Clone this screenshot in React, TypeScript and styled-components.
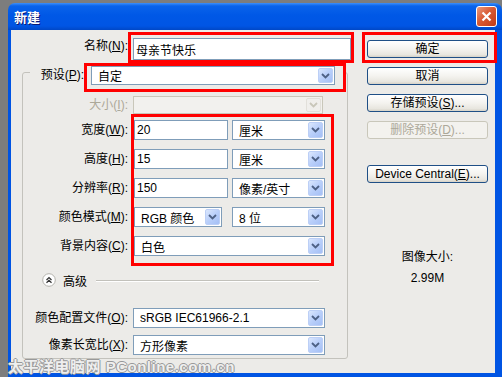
import styled, { createGlobalStyle } from "styled-components";

const GlobalStyle = createGlobalStyle`
  html, body {
    margin: 0;
    padding: 0;
    background: #7d7d7d;
    overflow: hidden;
  }
  body {
    font-family: "Liberation Sans", "Noto Sans CJK SC", sans-serif;
    font-size: 12px;
    color: #000;
  }
`;

const FACE = "#ecebe8";
const RED = "#ff0000";

const Window = styled.div`
  position: relative;
  margin: 3px 0 0 8px;
  width: 494px;
  display: flex;
  flex-direction: column;
`;

const TitleBar = styled.div`
  height: 27px;
  border-radius: 7px 7px 0 0;
  background: linear-gradient(
    #3d8ff9 0,
    #0a63ea 3px,
    #0058e6 45%,
    #0055e4 85%,
    #0047c6 100%
  );
  display: flex;
  align-items: center;
  justify-content: space-between;
  padding: 0 5px 0 6px;
`;

const Title = styled.span`
  color: #fff;
  font-weight: bold;
  font-size: 13px;
  text-shadow: 1px 1px 0 #0a1874;
`;

const CloseBtn = styled.div`
  width: 19px;
  height: 19px;
  border: 1px solid #fff;
  border-radius: 3px;
  background: linear-gradient(135deg, #e89a7e 0, #d95a34 45%, #c23a16 100%);
  display: flex;
  align-items: center;
  justify-content: center;
`;

const Client = styled.div`
  height: 343px;
  background: ${FACE};
  border-left: 3px solid #0054e3;
  border-right: 7px solid #0054e3;
  border-bottom: 4px solid #0054e3;
  display: grid;
  grid-template-columns: 345px 1fr;
`;

const LeftCol = styled.div`
  display: flex;
  flex-direction: column;
`;

const RightCol = styled.div`
  display: flex;
  flex-direction: column;
`;

const NameRow = styled.div`
  margin-top: 2px;
  display: grid;
  grid-template-columns: 117px 226px;
  align-items: start;
`;

const Label = styled.span<{ $disabled?: boolean; $h?: number }>`
  text-align: right;
  white-space: nowrap;
  line-height: ${(p) => p.$h ?? 20}px;
  height: ${(p) => p.$h ?? 20}px;
  color: ${(p) => (p.$disabled ? "#aca899" : "#000")};
`;

const RedBox = styled.div<{ $pad: string }>`
  border: 3px solid ${RED};
  padding: ${(p) => p.$pad};
  display: flex;
  flex-direction: column;
  gap: 9px;
`;

const TextInput = styled.input<{ $w: number; $h?: number }>`
  box-sizing: border-box;
  width: ${(p) => p.$w}px;
  height: ${(p) => p.$h ?? 20}px;
  border: 1px solid #7f9db9;
  background: #fff;
  padding: 0 0 0 2px;
  margin: 0;
  font: inherit;
  color: #000;
  outline: none;
`;

const SelectBox = styled.div<{ $w: number; $h?: number; $disabled?: boolean }>`
  box-sizing: border-box;
  width: ${(p) => p.$w}px;
  height: ${(p) => p.$h ?? 20}px;
  border: 1px solid ${(p) => (p.$disabled ? "#c9c7ba" : "#7f9db9")};
  background: ${(p) => (p.$disabled ? "#f2f1ee" : "#fff")};
  display: flex;
  align-items: center;
  justify-content: space-between;
  padding: 1px;
`;

const SelectText = styled.span`
  padding-left: 5px;
  white-space: nowrap;
`;

const ArrowBtn = styled.div<{ $disabled?: boolean }>`
  width: 15px;
  align-self: stretch;
  border-radius: 2px;
  background: ${(p) =>
    p.$disabled
      ? "#f0efec"
      : "linear-gradient(135deg, #dbe7fd 0, #b9cffa 50%, #a4bff5 100%)"};
  border: ${(p) => (p.$disabled ? "1px solid #e2e0da" : "1px solid #bccff6")};
  box-sizing: border-box;
  display: flex;
  align-items: center;
  justify-content: center;
`;

const Group = styled.div`
  margin: 9px 0 0 11px;
  width: 324px;
  border: 1px solid #c3c2bc;
  border-radius: 3px;
  padding-bottom: 3px;
  display: flex;
  flex-direction: column;
`;

const GroupHeader = styled.div`
  margin: -10px 0 0 7px;
  width: 316px;
  background: ${FACE};
  display: grid;
  grid-template-columns: 54px 262px;
  align-items: start;
`;

const PlainRow = styled.div<{ $top: number }>`
  margin-top: ${(p) => p.$top}px;
  display: grid;
  grid-template-columns: 105px auto;
  column-gap: 5px;
  align-items: center;
`;

const FieldSection = styled.div`
  display: flex;
  align-items: flex-start;
`;

const LabelStack = styled.div`
  width: 105px;
  padding: 6px 3px 0 0;
  display: flex;
  flex-direction: column;
  gap: 9px;
`;

const FieldLine = styled.div<{ $gap?: number }>`
  display: flex;
  gap: ${(p) => p.$gap ?? 4}px;
`;

const AdvancedRow = styled.div`
  margin: 7px 0 0 19px;
  height: 14px;
  display: flex;
  align-items: center;
  gap: 7px;
`;

const Rule = styled.div`
  margin-left: 2px;
  width: 223px;
  height: 1px;
  background: #c2c1bb;
  box-shadow: 0 1px 0 #fff;
`;

const Button = styled.div<{ $disabled?: boolean }>`
  box-sizing: border-box;
  width: 121px;
  height: 18px;
  border: 1px solid ${(p) => (p.$disabled ? "#c9c7ba" : "#1f4f86")};
  border-radius: 3px;
  background: ${(p) =>
    p.$disabled
      ? "#f3f2ee"
      : "linear-gradient(#ffffff 0, #f4f3ef 50%, #e8e6df 85%, #d6d2c7 100%)"};
  color: ${(p) => (p.$disabled ? "#aca899" : "#000")};
  display: flex;
  align-items: center;
  justify-content: center;
  white-space: nowrap;
  line-height: 16px;
`;

const ButtonSlot = styled.div<{ $top: number }>`
  margin: ${(p) => p.$top}px 0 0 11px;
`;

const OkBox = styled.div`
  margin: 2px 0 0 6px;
  width: 125px;
  border: 3px solid ${RED};
  padding: 5px 2px 2px;
`;

const Info = styled.div`
  margin: 67px 0 0 11px;
  width: 121px;
  text-align: center;
  line-height: 14px;
  display: flex;
  flex-direction: column;
  gap: 7px;
`;

const Watermark = styled.div`
  position: absolute;
  left: 0;
  top: 356px;
  font-size: 15px;
  line-height: 16px;
  font-weight: bold;
  color: rgba(255, 255, 255, 0.85);
  letter-spacing: 0.5px;
  white-space: nowrap;
  text-shadow: 1px 0 0 #999, -1px 0 0 #999, 0 1px 0 #999, 0 -1px 0 #999;
`;

function Arrow({ disabled }: { disabled?: boolean }) {
  return (
    <ArrowBtn $disabled={disabled}>
      <svg width="9" height="6" viewBox="0 0 9 6">
        <path
          d="M1 1 L4.5 4.5 L8 1"
          fill="none"
          stroke={disabled ? "#c9c7ba" : "#4d6185"}
          strokeWidth="1.8"
        />
      </svg>
    </ArrowBtn>
  );
}

type SelectProps = {
  w: number;
  h?: number;
  text?: string;
  disabled?: boolean;
};

function Select({ w, h, text, disabled }: SelectProps) {
  return (
    <SelectBox $w={w} $h={h} $disabled={disabled}>
      <SelectText>{text}</SelectText>
      <Arrow disabled={disabled} />
    </SelectBox>
  );
}

function Mn({ label, k }: { label: string; k: string }) {
  return (
    <>
      {label}(<u>{k}</u>):
    </>
  );
}

function CollapseIcon() {
  return (
    <svg width="14" height="14" viewBox="0 0 14 14">
      <circle cx="7" cy="7" r="6.3" fill="#fff" stroke="#b4b3ad" />
      <path
        d="M4.5 7 L7 4.6 L9.5 7 M4.5 9.8 L7 7.4 L9.5 9.8"
        fill="none"
        stroke="#333"
        strokeWidth="1.3"
      />
    </svg>
  );
}

export default function App() {
  return (
    <>
      <GlobalStyle />
      <Window>
        <TitleBar>
          <Title>新建</Title>
          <CloseBtn>
            <svg width="11" height="11" viewBox="0 0 11 11">
              <path d="M1.5 1.5 L9.5 9.5 M9.5 1.5 L1.5 9.5" stroke="#fff" strokeWidth="2.2" />
            </svg>
          </CloseBtn>
        </TitleBar>
        <Client>
          <LeftCol>
            <NameRow>
              <Label $h={28}>
                <Mn label="名称" k="N" />
              </Label>
              <RedBox $pad="3px 0 0 2px">
                <TextInput $w={218} $h={22} value="母亲节快乐" readOnly />
              </RedBox>
            </NameRow>

            <Group>
              <GroupHeader>
                <Label $h={25}>
                  <Mn label="预设" k="P" />
                </Label>
                <RedBox $pad="0 8px 4px 4px">
                  <Select w={244} h={19} text="自定" />
                </RedBox>
              </GroupHeader>

              <PlainRow $top={4}>
                <Label $disabled $h={18}>
                  <Mn label="大小" k="I" />
                </Label>
                <Select w={190} h={18} disabled />
              </PlainRow>

              <FieldSection>
                <LabelStack>
                  <Label>
                    <Mn label="宽度" k="W" />
                  </Label>
                  <Label>
                    <Mn label="高度" k="H" />
                  </Label>
                  <Label>
                    <Mn label="分辨率" k="R" />
                  </Label>
                  <Label>
                    <Mn label="颜色模式" k="M" />
                  </Label>
                  <Label>
                    <Mn label="背景内容" k="C" />
                  </Label>
                </LabelStack>
                <RedBox $pad="3px 6px 7px 0">
                  <FieldLine>
                    <TextInput $w={94} value="20" readOnly />
                    <Select w={93} text="厘米" />
                  </FieldLine>
                  <FieldLine>
                    <TextInput $w={94} value="15" readOnly />
                    <Select w={93} text="厘米" />
                  </FieldLine>
                  <FieldLine>
                    <TextInput $w={94} value="150" readOnly />
                    <Select w={93} text="像素/英寸" />
                  </FieldLine>
                  <FieldLine $gap={10}>
                    <Select w={88} text="RGB 颜色" />
                    <Select w={93} text="8 位" />
                  </FieldLine>
                  <FieldLine>
                    <Select w={191} text="白色" />
                  </FieldLine>
                </RedBox>
              </FieldSection>

              <AdvancedRow>
                <CollapseIcon />
                <span>高级</span>
                <Rule />
              </AdvancedRow>

              <PlainRow $top={21}>
                <Label>
                  <Mn label="颜色配置文件" k="O" />
                </Label>
                <Select w={192} text="sRGB IEC61966-2.1" />
              </PlainRow>
              <PlainRow $top={7}>
                <Label>
                  <Mn label="像素长宽比" k="X" />
                </Label>
                <Select w={192} text="方形像素" />
              </PlainRow>
            </Group>
          </LeftCol>

          <RightCol>
            <OkBox>
              <Button>确定</Button>
            </OkBox>
            <ButtonSlot $top={4}>
              <Button>取消</Button>
            </ButtonSlot>
            <ButtonSlot $top={9}>
              <Button>
                存储预设(<u>S</u>)...
              </Button>
            </ButtonSlot>
            <ButtonSlot $top={9}>
              <Button $disabled>
                删除预设(<u>D</u>)...
              </Button>
            </ButtonSlot>
            <ButtonSlot $top={26}>
              <Button>
                Device Central(<u>E</u>)...
              </Button>
            </ButtonSlot>
            <Info>
              <span>图像大小:</span>
              <span>2.99M</span>
            </Info>
          </RightCol>
        </Client>
        <Watermark>太平洋电脑网 PConline.com.cn</Watermark>
      </Window>
    </>
  );
}
